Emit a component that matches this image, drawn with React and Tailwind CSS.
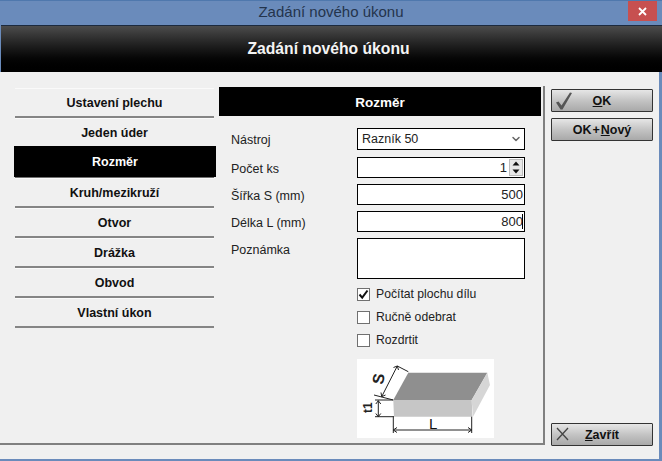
import React from "react";
import { ChevronDown } from "lucide-react";

const menu = ["Ustavení plechu", "Jeden úder", "Rozměr", "Kruh/mezikruží", "Otvor", "Drážka", "Obvod", "Vlastní úkon"];

function MenuItem({ label }) {
  if (label === "Rozměr") {
    return (
      <div className="relative z-10 -mt-[2px] h-[32px]">
        <div className="-ml-px -mr-[2px] flex h-[31px] items-center justify-center bg-black text-[12.5px] font-bold text-white">
          <span className="mt-[2px]">{label}</span>
        </div>
        <div className="h-px bg-[#707070]" />
      </div>
    );
  }
  return (
    <div className="flex h-[30px] items-center justify-center border-t border-[#fafafa] border-b-2 border-b-[#858585] bg-[#f0f0f0] text-[12.5px] font-bold text-[#111]">
      <span className="mt-px">{label}</span>
    </div>
  );
}

function Check({ checked, label }) {
  return (
    <div className="flex h-[23px] items-center gap-[6px] text-[12.2px] text-[#222]">
      <div className="flex h-[13px] w-[13px] items-center justify-center border border-[#707070] bg-white">
        {checked && (
          <svg width="11" height="11" viewBox="0 0 11 11">
            <path d="M1.5 5.5 L4.2 8.6 L9.5 1.5" fill="none" stroke="#111" strokeWidth="2" />
          </svg>
        )}
      </div>
      <span>{label}</span>
    </div>
  );
}

function Btn({ icon, children, className = "" }) {
  return (
    <div className={"relative flex h-[23px] w-[102px] items-center justify-center rounded-[1px] border border-[#333] bg-gradient-to-b from-[#e6e6e6] via-[#c4c4c4] to-[#a9a9a9] text-[12.5px] font-bold text-[#111] " + className}>
      {icon}
      <span className="mt-[2px]">{children}</span>
    </div>
  );
}

function Field({ value, extra, className = "h-[21px]" }) {
  return (
    <div className={"flex w-[168px] items-center justify-end border border-black bg-white pr-[1px] text-[13px] text-[#222] " + className}>
      <span>{value}</span>
      {extra}
    </div>
  );
}

function Block() {
  return (
    <div className="mt-[7px] h-[79px] w-[137px] bg-white">
      <svg width="137" height="79" viewBox="0 0 137 79">
        <polygon points="51.3,13.7 130.3,13.7 114.7,41 36.3,41" fill="#8f8f8f" />
        <polygon points="36.3,41 114.7,41 115.5,57.7 37,57.7" fill="#c6c6c6" />
        <polygon points="130.3,13.7 133,26 116,57.7 114.7,41" fill="#d6d6d6" />
        <g stroke="#222" strokeWidth="1" fill="none">
          <path d="M40.3 7 L24.7 37.7 M36.5 8.5 L40.3 7 L41.5 11 M24 33.5 L24.7 37.7 L28.5 36" />
          <path d="M40.3 7 L51.3 12.7 M17 36 L36.3 41" />
          <path d="M21.3 41.7 V57.7 M18.8 45 L21.3 41.7 L23.8 45 M18.8 54.5 L21.3 57.7 L23.8 54.5" />
          <path d="M18 41 H36 M18 57.7 H37" />
          <path d="M36.3 57.7 V74 M114.7 57.7 V74 M36.3 71 H114.7 M40 68.5 L36.3 71 L40 73.5 M111 68.5 L114.7 71 L111 73.5" />
        </g>
        <text x="72" y="70" fontSize="15" fill="#111" fontFamily="Liberation Sans">L</text>
        <text transform="translate(26,26) rotate(-80)" fontSize="16" fontWeight="bold" fill="#222" fontFamily="Liberation Sans">S</text>
        <text transform="translate(15,54) rotate(-90)" fontSize="12" fontWeight="bold" fill="#222" fontFamily="Liberation Sans">t1</text>
      </svg>
    </div>
  );
}

export default function App() {
  const labels = [
    ["Nástroj", "h-[29px]"],
    ["Počet ks", "h-[28px]"],
    ["Šířka S (mm)", "h-[27px]"],
    ["Délka L (mm)", "h-[27px]"],
    ["Poznámka", "h-[26px]"],
  ];
  return (
    <div className="flex h-[461px] w-[662px] flex-col overflow-hidden bg-[#6a8bbb] font-['Liberation_Sans',sans-serif]">
      <div className="relative flex h-[25px] shrink-0 items-center justify-center border-t border-[#4f78ad] text-[15px] text-[#24344c]">
        <span className="-mt-px">Zadání nového úkonu</span>
        <div className="absolute right-[5px] top-0 flex h-[20px] w-[29px] items-center justify-center bg-[#c75050]">
          <svg width="9" height="9" viewBox="0 0 9 9">
            <path d="M1 1 L8 8 M8 1 L1 8" stroke="#fff" strokeWidth="1.8" />
          </svg>
        </div>
      </div>
      <div className="ml-px flex h-[47px] shrink-0 items-center justify-center border-t border-[#1c2a3e] bg-gradient-to-b from-[#4c4c4c] to-black pr-[6px] text-[15.7px] font-bold text-[#f4f4f4]">
        <span>Zadání nového úkonu</span>
      </div>
      <div className="mb-[2px] mr-[3px] flex flex-1 flex-col bg-[#f0f0f0]">
        <div className="flex h-[373px] shrink-0">
          <div className="flex h-full w-[545px] shrink-0 flex-col border-b-2 border-[#808080] pt-[14px]">
            <div className="flex flex-1 gap-[5px] border-r-2 border-[#808080] pl-[15px] pt-px">
              <div className="mt-px w-[199px] shrink-0">
                {menu.map((m) => (
                  <MenuItem key={m} label={m} />
                ))}
              </div>
              <div className="w-[322px] shrink-0">
                <div className="flex h-[29px] items-center justify-center bg-black text-[13.5px] font-bold text-white">
                  <span className="mt-[4px]">Rozměr</span>
                </div>
                <div className="flex pt-[12px]">
                  <div className="-mt-[2px] w-[138px] shrink-0 pl-[12px] text-[12.5px] text-[#222]">
                    {labels.map(([l, h]) => (
                      <div key={l} className={"flex items-center " + h}>{l}</div>
                    ))}
                  </div>
                  <div className="flex flex-col">
                    <div className="flex h-[22px] w-[168px] items-center justify-between border border-black bg-white pl-[4px] pr-[2px] text-[12.5px] text-[#222]">
                      <span>Razník 50</span>
                      <ChevronDown size={12} strokeWidth={3} className="text-[#666]" />
                    </div>
                    <Field
                      className="mt-[7px] h-[21px]"
                      value="1"
                      extra={
                        <div className="ml-[2px] flex h-[17px] w-[14px] flex-col items-center justify-between border border-[#bbb] bg-[#e8e8e8] text-[#111]">
                          <svg width="8" height="7" viewBox="0 0 8 7"><path d="M4 1.5 L7.5 5.5 H0.5 Z" fill="#111" /></svg>
                          <svg width="8" height="7" viewBox="0 0 8 7"><path d="M4 5.5 L7.5 1.5 H0.5 Z" fill="#111" /></svg>
                        </div>
                      }
                    />
                    <Field className="mt-[6px] h-[21px]" value="500" />
                    <Field className="mt-[6px] h-[21px]" value="800" extra={<div className="-ml-[1px] h-[15px] w-px bg-black" />} />
                    <div className="mt-[6px] h-[41px] w-[168px] border border-black bg-white" />
                    <div className="mt-[4px]">
                      <Check checked label="Počítat plochu dílu" />
                      <Check label="Ručně odebrat" />
                      <Check label="Rozdrtit" />
                    </div>
                    <Block />
                  </div>
                </div>
              </div>
            </div>
          </div>
          <div className="flex flex-1 flex-col items-start pl-[6px] pt-[17px]">
            <Btn
              icon={
                <svg className="absolute left-[2px] top-0" width="20" height="21" viewBox="0 0 20 21">
                  <path d="M2 12.5 L4.5 11.5 L7.5 15.5 L16 2.5 L18 3 L8.5 19.5 L6.5 19.5 Z" fill="#555" />
                </svg>
              }
            >
              <span className="underline">O</span>K
            </Btn>
            <Btn className="mt-[6px]">
              OK<span className="mx-[1px]">+</span><span className="underline">N</span>ový
            </Btn>
            <Btn
              className="mt-auto -mb-[1px]"
              icon={
                <svg className="absolute left-[4px] top-[3px]" width="13" height="14" viewBox="0 0 13 14">
                  <path d="M1 1 L12 13 M12 1 L1 13" stroke="#444" strokeWidth="1.3" />
                </svg>
              }
            >
              <span className="underline">Z</span>avřít
            </Btn>
          </div>
        </div>
        <div className="flex-1" />
      </div>
    </div>
  );
}
